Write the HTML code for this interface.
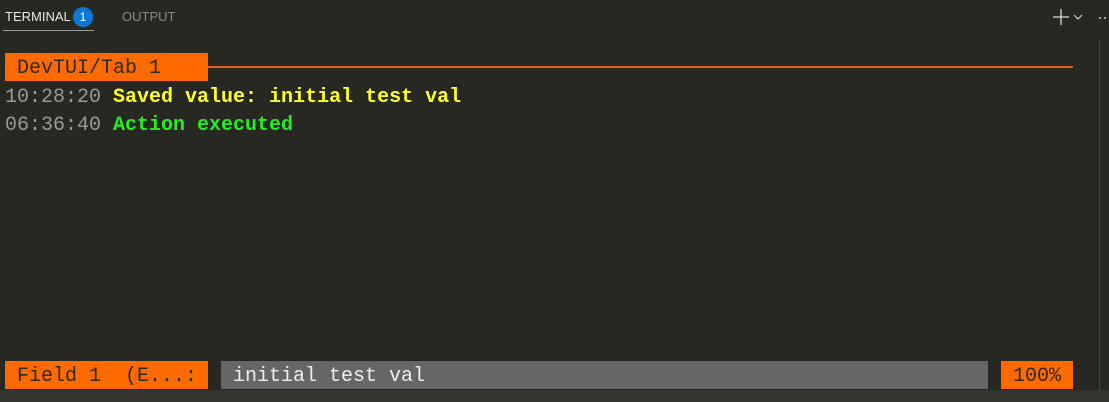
<!DOCTYPE html><html><head><style>
body{margin:0;width:1109px;height:402px;background:#282822;overflow:hidden;position:relative;font-family:"Liberation Mono",monospace;}
.ui{font-family:"Liberation Sans",sans-serif;font-size:13px;position:absolute}
.m{position:absolute;font-size:20px;line-height:28px;white-space:pre;padding-top:2px}
</style></head><body>
<div class="ui" style="left:5px;top:9px;color:#e7e7e7">TERMINAL</div>
<div style="position:absolute;left:73px;top:7px;width:20px;height:20px;border-radius:10px;background:#0a78d4;color:#fff;font:12px 'Liberation Sans',sans-serif;text-align:center;line-height:20px">1</div>
<div style="position:absolute;left:3px;top:30px;width:91px;height:1px;background:#9a9a9a"></div>
<div class="ui" style="left:122px;top:9px;color:#888">OUTPUT</div>
<svg style="position:absolute;left:1050px;top:7px" width="59" height="20"><path d="M3 10H19M11 2V18" stroke="#ddd" stroke-width="1.3"/><path d="M24 8l4 4 4-4" stroke="#ccc" fill="none" stroke-width="1.2"/><circle cx="50" cy="11" r="1" fill="#ccc"/><circle cx="55" cy="11" r="1" fill="#ccc"/></svg>
<div style="position:absolute;left:1099px;top:40px;width:1px;height:350px;background:#444"></div>
<div style="position:absolute;left:5px;top:53px;width:203px;height:28px;background:#ff6a00"></div>
<div class="m" style="left:5px;top:53px;color:#2a2a20"> DevTUI/Tab 1</div>
<div style="position:absolute;left:208px;top:66px;width:865px;height:2px;background:#e2601a"></div>
<div class="m" style="left:5px;top:82px;color:#999">10:28:20 <b style="color:#ffff2a">Saved value: initial test val</b></div>
<div class="m" style="left:5px;top:110px;color:#999">06:36:40 <b style="color:#22ee22">Action executed</b></div>
<div style="position:absolute;left:5px;top:361px;width:203px;height:28px;background:#ff6a00"></div>
<div class="m" style="left:5px;top:361px;color:#2a2a20"> Field 1  (E...:</div>
<div style="position:absolute;left:221px;top:361px;width:767px;height:28px;background:#666"></div>
<div class="m" style="left:221px;top:361px;color:#eee"> initial test val</div>
<div style="position:absolute;left:1001px;top:361px;width:72px;height:28px;background:#ff6a00"></div>
<div class="m" style="left:1001px;top:361px;color:#2a2a20"> 100%</div>
<div style="position:absolute;left:0;top:390px;width:1109px;height:12px;background:#35352f"></div>
</body></html>
